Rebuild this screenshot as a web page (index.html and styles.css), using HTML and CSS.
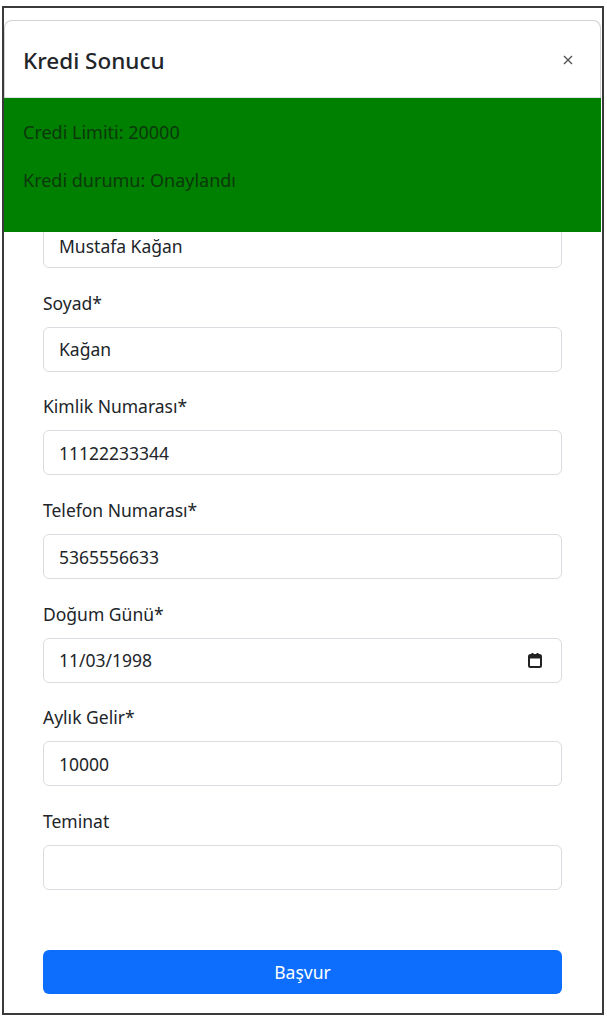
FILE: index.html
```html
<!DOCTYPE html>
<html lang="tr">
<head>
<meta charset="utf-8">
<title>Kredi Sonucu</title>
<link rel="stylesheet" href="styles.css">
</head>
<body>
<div class="frame">
  <form class="page">
    <div class="group">
      <span class="label"></span>
      <div class="input">Mustafa Kağan</div>
    </div>
    <div class="group">
      <label class="label">Soyad*</label>
      <div class="input">Kağan</div>
    </div>
    <div class="group">
      <label class="label">Kimlik Numarası*</label>
      <div class="input">11122233344</div>
    </div>
    <div class="group">
      <label class="label">Telefon Numarası*</label>
      <div class="input">5365556633</div>
    </div>
    <div class="group">
      <label class="label">Doğum Günü*</label>
      <div class="input date">
        <span>11/03/1998</span>
        <svg class="cal" width="14" height="15" viewBox="0 0 14 15"><rect x="1" y="2" width="12" height="12" rx="1.5" fill="none" stroke="#222" stroke-width="2"/><rect x="1" y="2" width="12" height="3.5" fill="#222"/><rect x="3.5" y="0" width="2" height="3" fill="#222"/><rect x="8.5" y="0" width="2" height="3" fill="#222"/></svg>
      </div>
    </div>
    <div class="group">
      <label class="label">Aylık Gelir*</label>
      <div class="input">10000</div>
    </div>
    <div class="group">
      <label class="label">Teminat</label>
      <div class="input"></div>
    </div>
    <div class="submit">Başvur</div>
  </form>
  <div class="modal">
    <div class="modal-header">
      <h5 class="modal-title">Kredi Sonucu</h5>
      <span class="btn-close"><svg width="10" height="10" viewBox="0 0 10 10"><path d="M1 1L9 9M9 1L1 9" stroke="#555" stroke-width="1.4"/></svg></span>
    </div>
    <div class="modal-body">
      <p class="line">Credi Limiti: 20000</p>
      <p class="line">Kredi durumu: Onaylandı</p>
    </div>
  </div>
</div>
</body>
</html>
```

FILE: styles.css
```css
html, body {
  margin: 0;
  padding: 0;
  background: #ffffff;
}
body {
  font-family: "Segoe UI", "Noto Sans", "Open Sans", sans-serif;
  color: #212529;
}
.frame {
  position: relative;
  box-sizing: border-box;
  width: 602px;
  height: 1009px;
  margin: 6px 0 0 2px;
  border: 2px solid #3a3a3a;
  overflow: hidden;
  background: #fff;
}
.page {
  display: flex;
  flex-direction: column;
  padding: 178px 40px 0 39px;
}
.group {
  display: flex;
  flex-direction: column;
  margin-bottom: 21.7px;
}
.label {
  height: 26px;
  line-height: 26px;
  font-size: 17.5px;
  margin-bottom: 11px;
}
.input {
  box-sizing: border-box;
  height: 45px;
  border: 1px solid #d9dce0;
  border-radius: 6px;
  padding: 0 15px;
  display: flex;
  align-items: center;
  font-size: 17.5px;
  color: #212529;
}
.date {
  justify-content: space-between;
  padding-right: 19px;
}
.submit {
  margin-top: 38px;
  height: 44px;
  border-radius: 6px;
  background: #0d6efd;
  color: #fff;
  font-size: 17.5px;
  display: flex;
  align-items: center;
  justify-content: center;
}
.modal {
  position: absolute;
  top: 12px;
  left: 0;
  right: 1px;
  border: 1px solid #d2d2d2;
  border-bottom: none;
  border-radius: 8px 8px 0 0;
  background: #fff;
}
.modal-header {
  height: 77px;
  box-sizing: border-box;
  display: flex;
  align-items: center;
  justify-content: space-between;
  padding: 2px 27px 0 18px;
  border-bottom: 1px solid #dee2e6;
}
.modal-title {
  margin: 0;
  font-size: 22.5px;
  font-weight: 500;
  line-height: 1.2;
}
.btn-close {
  display: flex;
  align-items: center;
}
.modal-body {
  background: #008000;
  margin: 0 -1px;
  padding: 22px 18px 16px 19px;
}
.line {
  margin: 0 0 24px 0;
  font-size: 18px;
  line-height: 24px;
  color: #0c380c;
}
```
